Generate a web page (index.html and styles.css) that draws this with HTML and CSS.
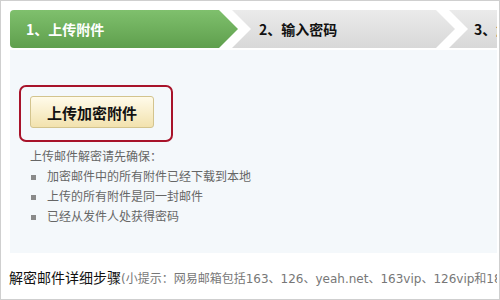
FILE: index.html
```html
<!DOCTYPE html>
<html lang="zh">
<head>
<meta charset="utf-8">
<title>解密附件</title>
<link rel="stylesheet" href="styles.css">
</head>
<body>
<div class="page">
  <div class="steps">
    <div class="step step-first active"><span>1、上传附件</span></div>
    <div class="step step-mid"><span>2、输入密码</span></div>
    <div class="step step-last"><span>3、解密附件</span></div>
  </div>
  <div class="panel">
    <div class="highlight">
      <button class="upload-btn" type="button">上传加密附件</button>
    </div>
    <p class="intro">上传邮件解密请先确保：</p>
    <ul class="checklist">
      <li>加密邮件中的所有附件已经下载到本地</li>
      <li>上传的所有附件是同一封邮件</li>
      <li>已经从发件人处获得密码</li>
    </ul>
  </div>
  <div class="footer-line">
    <span class="footer-title">解密邮件详细步骤</span><span class="footer-tip">(小提示：网易邮箱包括163、126、yeah.net、163vip、126vip和188邮箱)</span>
  </div>
</div>
</body>
</html>
```

FILE: styles.css
```css
html, body {
  margin: 0;
  padding: 0;
  background: #ffffff;
}

.page {
  width: 500px;
  height: 300px;
  box-sizing: border-box;
  border: 1px solid #cfcfcf;
  padding: 9px 2px 0 8px;
  overflow: hidden;
  font-family: "DejaVu Sans", "Noto Sans CJK SC", sans-serif;
  display: flex;
  flex-direction: column;
}

.steps {
  display: flex;
  height: 38px;
  margin-left: 1px;
  flex: none;
}

.step {
  height: 38px;
  display: flex;
  align-items: center;
  font-family: "Noto Sans CJK SC", sans-serif;
  font-weight: bold;
  font-size: 14px;
  white-space: nowrap;
  overflow: hidden;
  background: linear-gradient(#ebebeb, #d8d8d8);
  color: #111;
}

.step-first {
  width: 228px;
  padding-left: 16px;
  box-sizing: border-box;
  border-radius: 4px 0 0 4px;
  clip-path: polygon(0 0, calc(100% - 19px) 0, 100% 50%, calc(100% - 19px) 100%, 0 100%);
}

.step.active {
  background: linear-gradient(#7fc06d, #5f9f4d);
  color: #ffffff;
}

.step-mid {
  width: 223px;
  margin-left: -6px;
  padding-left: 27px;
  box-sizing: border-box;
  clip-path: polygon(0 0, calc(100% - 19px) 0, 100% 50%, calc(100% - 19px) 100%, 0 100%, 19px 50%);
}

.step-last {
  flex: 1;
  margin-left: -6px;
  padding-left: 25px;
  clip-path: polygon(0 0, 100% 0, 100% 100%, 0 100%, 19px 50%);
}

.panel {
  margin: 2px 0 0 1px;
  height: 203px;
  flex: none;
  background: #f4f8fb;
  padding: 35px 0 0 9px;
  box-sizing: border-box;
}

.highlight {
  display: inline-block;
  border: 2px solid #a8132a;
  border-radius: 7px;
  padding: 9px 17px 12px 9px;
}

.upload-btn {
  display: block;
  width: 124px;
  height: 32px;
  margin: 0;
  padding: 0;
  border: 1px solid #d3c48e;
  border-radius: 3px;
  background: linear-gradient(#fffbea, #f2e2ae);
  font-family: "Noto Sans CJK SC", sans-serif;
  font-weight: bold;
  font-size: 15px;
  color: #111;
  cursor: pointer;
}

.intro {
  margin: 5px 0 0 11px;
  font-size: 12px;
  line-height: 20px;
  color: #666;
}

.checklist {
  list-style: none;
  margin: 0 0 0 12px;
  padding: 0;
  font-size: 12px;
  line-height: 20px;
  color: #666;
}

.checklist li {
  display: flex;
  align-items: center;
}

.checklist li::before {
  content: "";
  width: 5px;
  height: 5px;
  background: #8a8a8a;
  margin-right: 11px;
  flex: none;
}

.footer-line {
  margin-top: 13px;
  height: 22px;
  line-height: 22px;
  white-space: nowrap;
  overflow: hidden;
}

.footer-title {
  font-family: "Noto Sans CJK SC", sans-serif;
  font-size: 14px;
  color: #111;
}

.footer-tip {
  font-size: 12px;
  color: #777;
}
```
